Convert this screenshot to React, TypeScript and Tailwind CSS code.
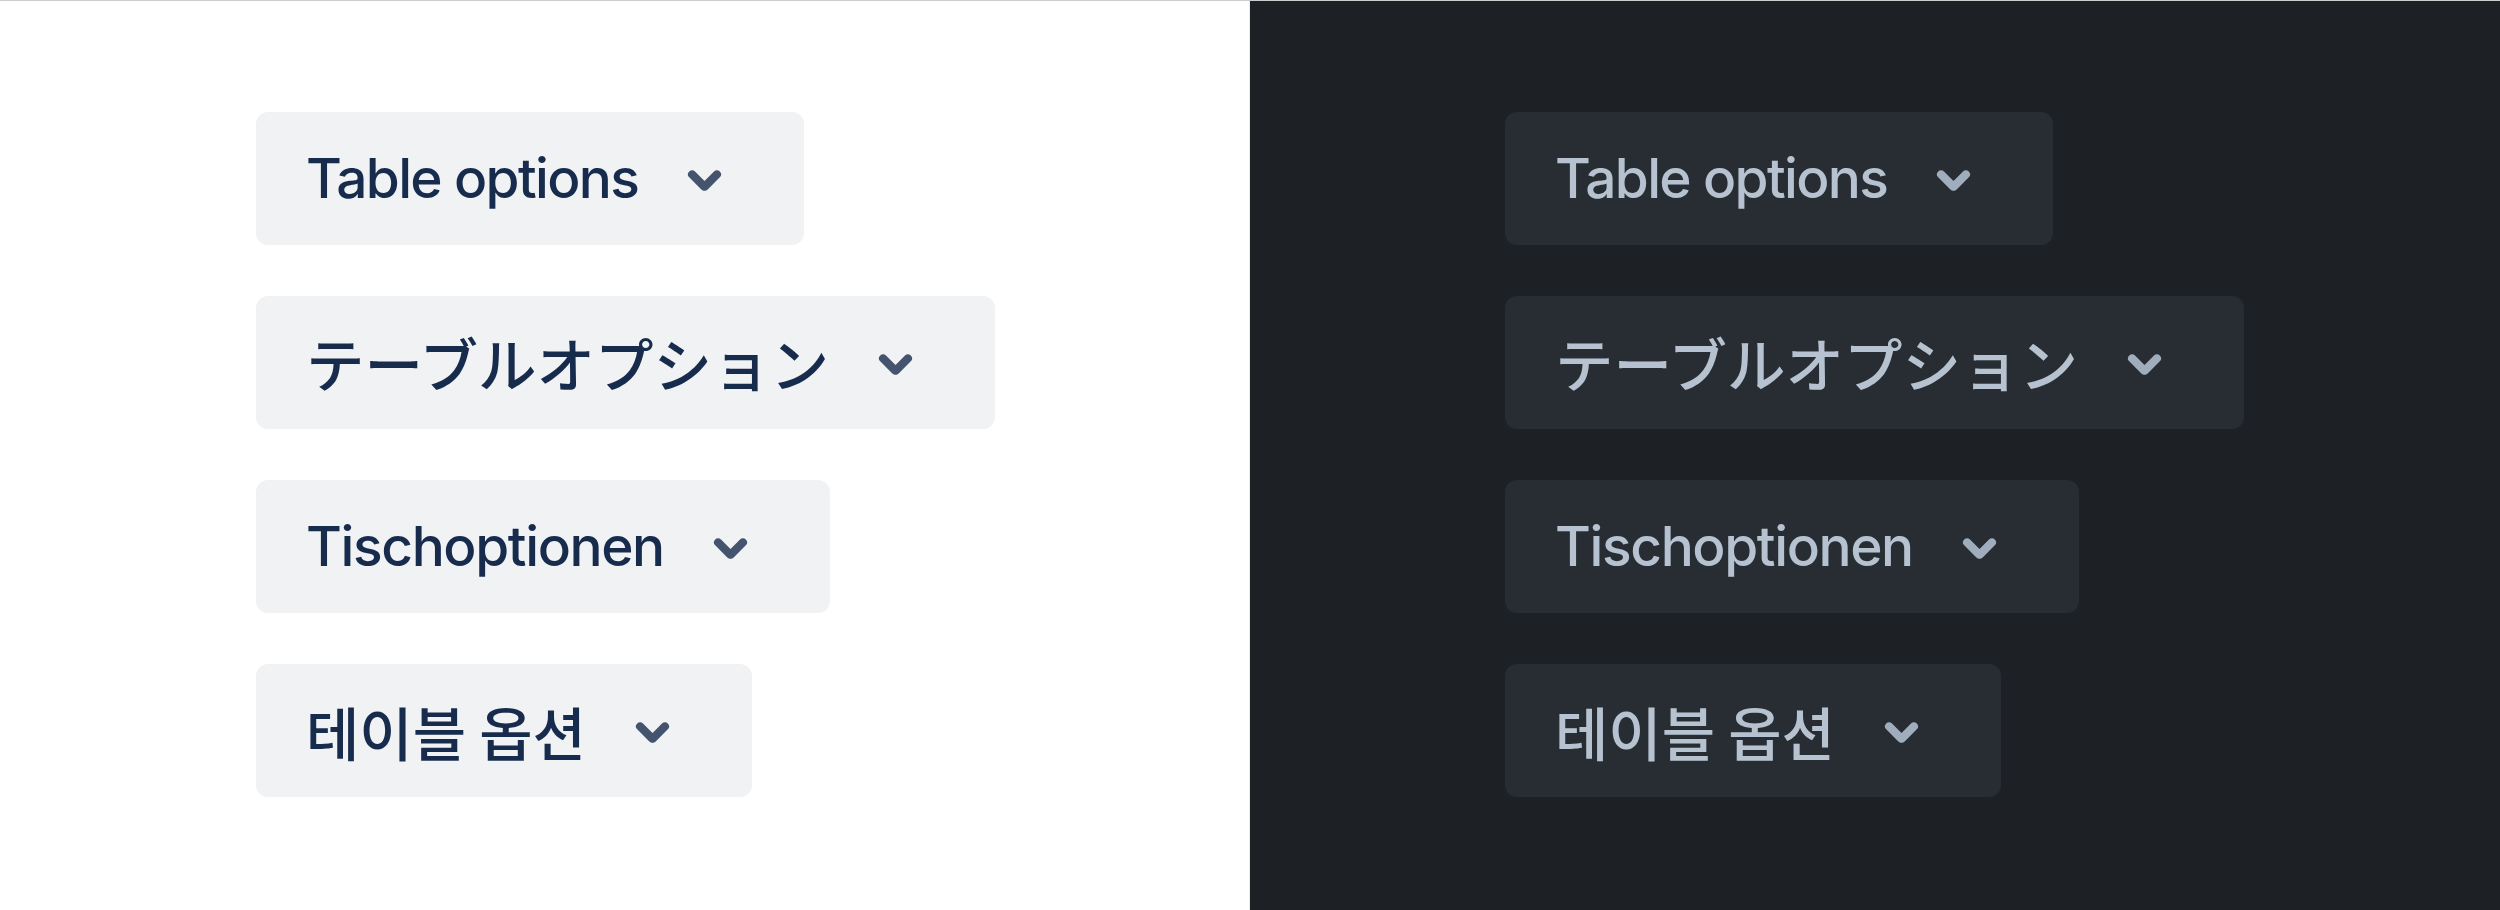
import React from "react";

const Chevron = ({ color }: { color: string }) => (
  <span className="flex h-[99px] w-[99px] shrink-0 items-center justify-center">
    <svg viewBox="0 0 24 24" width="99" height="99" aria-hidden="true">
      <path
        fill={color}
        d="M8.292 10.293a1.009 1.009 0 000 1.419l2.939 2.965c.218.215.5.322.779.322s.556-.107.769-.322l2.93-2.955a1.01 1.01 0 000-1.419.987.987 0 00-1.406 0l-2.298 2.317-2.307-2.327a.99.99 0 00-1.406 0z"
      />
    </svg>
  </span>
);

type Item = { label: string; cls: string };

const items: Item[] = [
  { label: "Table options", cls: "text-[55px] tracking-[-0.03em] font-['Inter',sans-serif]" },
  { label: "テーブルオプション", cls: "text-[58.5px] font-['Noto_Sans_CJK_JP',sans-serif]" },
  { label: "Tischoptionen", cls: "text-[55px] tracking-[-0.025em] font-['Inter',sans-serif]" },
  { label: "테이블 옵션", cls: "text-[58px] font-['Noto_Sans_CJK_KR',sans-serif]" },
];

const Panel = ({ dark }: { dark: boolean }) => (
  <div
    className={
      dark
        ? "flex w-[1250px] flex-col items-start gap-[51px] bg-[#1D2125] pl-[255px] pt-[111px]"
        : "flex w-[1250px] flex-col items-start gap-[51px] border-r border-[#ececec] bg-white pl-[256px] pt-[111px]"
    }
  >
    {items.map((it) => (
      <button
        key={it.label}
        className={
          dark
            ? "flex h-[133px] items-center gap-[17px] rounded-[12px] bg-[#272D33] pl-[50px] pr-[50px] text-[#B6C2CF]"
            : "flex h-[133px] items-center gap-[17px] rounded-[12px] bg-[#F1F2F4] pl-[50px] pr-[50px] text-[#172B4D]"
        }
      >
        <span className={`whitespace-nowrap font-medium leading-none ${it.cls}`}>{it.label}</span>
        <Chevron color={dark ? "#9FADBC" : "#44546F"} />
      </button>
    ))}
  </div>
);

export default function App() {
  return (
    <div className="flex h-[910px] w-[2500px] border-t border-[#cccccc]">
      <Panel dark={false} />
      <Panel dark={true} />
    </div>
  );
}
